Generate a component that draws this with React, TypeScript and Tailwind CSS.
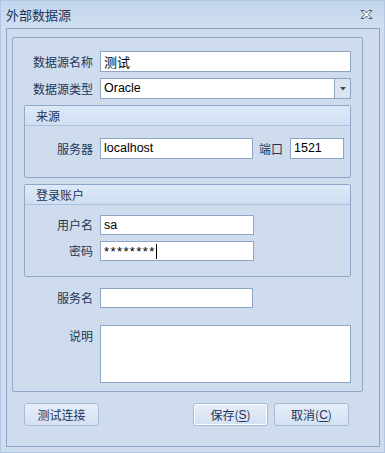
import React from 'react';

const cjk = '"Noto Sans CJK SC", "Liberation Sans", sans-serif';
const latin = '"Liberation Sans", "Noto Sans CJK SC", sans-serif';

function Label({ text, width = 'w-[87px]' }: { text: string; width?: string }) {
  return (
    <div className={`${width} shrink-0 pr-[7px] text-right text-[12px] leading-none text-[#1e3557]`}>{text}</div>
  );
}

function Field({ value, className = '' }: { value?: React.ReactNode; className?: string }) {
  return (
    <div
      className={`flex items-center bg-white border border-[#8ea5c5] px-[3px] text-[12.5px] text-black leading-none ${className}`}
      style={{ fontFamily: latin }}
    >
      {value}
    </div>
  );
}

function GroupBox({ title, className = '', children }: { title: string; className?: string; children: React.ReactNode }) {
  return (
    <div className={`ml-[11px] w-[327px] border border-[#8fa7c8] rounded-[2px] flex flex-col ${className}`}>
      <div className="h-[20px] shrink-0 bg-gradient-to-b from-[#dde9f8] to-[#cfdff3] border-b border-[#a9c2e2] flex items-center pl-[11px] text-[12px] text-[#1e3557]">
        {title}
      </div>
      {children}
    </div>
  );
}

function Btn({ children, focused = false, className = '' }: { children: React.ReactNode; focused?: boolean; className?: string }) {
  return (
    <div
      className={`w-[75px] h-[23px] rounded-[3px] border ${focused ? 'border-[#a4b9d6] shadow-[inset_0_0_0_1px_#ffffff]' : 'border-[#a9bcd6]'} bg-gradient-to-b from-[#e6eef9] to-[#d4e1f2] flex items-center justify-center text-[12px] text-[#1e3557] ${className}`}
    >
      {children}
    </div>
  );
}

export default function App() {
  return (
    <div
      className="w-[385px] h-[453px] bg-[#cddcef] border border-[#b2c6e2] flex flex-col overflow-hidden"
      style={{ fontFamily: cjk }}
    >
      {/* title bar */}
      <div className="h-[27px] shrink-0 bg-gradient-to-b from-[#c3d6ee] to-[#cfdef1] flex items-center justify-between pl-[5px] pr-[11px]">
        <span className="text-[13px] text-[#1e3557]">外部数据源</span>
        <svg width="13" height="11" viewBox="0 0 13 11">
          <path
            d="M1 1.5 L4 1.5 L6.5 4 L9 1.5 L12 1.5 L8.2 5.5 L12 9.5 L9 9.5 L6.5 7 L4 9.5 L1 9.5 L4.8 5.5 Z"
            fill="#ffffff"
            stroke="#4b5563"
            strokeWidth="1"
            strokeLinejoin="round"
          />
        </svg>
      </div>

      {/* outer panel */}
      <div className="ml-[5px] w-[374px] h-[419px] border border-[#8da3c3] bg-[#cfdcee] flex flex-col">
        <div className="ml-[5px] mt-[8px] w-[351px] h-[355px] border border-[#8fa7c8] rounded-[2px] flex flex-col">
          {/* name */}
          <div className="flex items-center mt-[13px]">
            <Label text="数据源名称" />
            <Field value={<span style={{ fontFamily: cjk }} className="text-[13px]">测试</span>} className="w-[251px] h-[21px]" />
          </div>
          {/* type */}
          <div className="flex items-center mt-[6px]">
            <Label text="数据源类型" />
            <div className="w-[251px] h-[21px] flex bg-white border border-[#8ea5c5]">
              <div className="flex-1 flex items-center px-[3px] text-[12.5px] text-black" style={{ fontFamily: latin }}>
                Oracle
              </div>
              <div className="w-[16px] border-l border-[#8ea5c5] bg-[#dbe5f2] flex items-center justify-center">
                <svg width="6" height="4" viewBox="0 0 6 4">
                  <path d="M0 0 L6 0 L3 3.5 Z" fill="#3f4a5c" />
                </svg>
              </div>
            </div>
          </div>

          {/* source group */}
          <GroupBox title="来源" className="mt-[6px] h-[73px]">
            <div className="flex items-center mt-[12px] -ml-[12px]">
              <Label text="服务器" />
              <Field value="localhost" className="w-[153px] h-[21px]" />
              <span className="ml-[6px] text-[12px] text-[#1e3557]">端口</span>
              <Field value="1521" className="ml-[7px] w-[54px] h-[21px]" />
            </div>
          </GroupBox>

          {/* login group */}
          <GroupBox title="登录账户" className="mt-[6px] h-[93px]">
            <div className="flex items-center mt-[10px] -ml-[12px]">
              <Label text="用户名" />
              <Field value="sa" className="w-[154px] h-[20px]" />
            </div>
            <div className="flex items-center mt-[6px] -ml-[12px]">
              <Label text="密码" />
              <Field
                value={
                  <span className="flex items-center">
                    <span className="tracking-[1.4px] text-[13px]">********</span>
                    <span className="w-px h-[15px] bg-black" />
                  </span>
                }
                className="w-[154px] h-[20px]"
              />
            </div>
          </GroupBox>

          {/* service name */}
          <div className="flex items-center mt-[11px]">
            <Label text="服务名" />
            <Field className="w-[153px] h-[20px]" />
          </div>

          {/* description */}
          <div className="flex items-start mt-[17px]">
            <div className="pt-[5px]">
              <Label text="说明" />
            </div>
            <Field className="w-[251px] h-[58px]" />
          </div>
        </div>

        {/* buttons */}
        <div className="flex items-center mt-[11px] ml-[17px]">
          <Btn>测试连接</Btn>
          <Btn focused className="ml-[94px]">
            保存(<span className="underline underline-offset-2" style={{ fontFamily: latin }}>S</span>)
          </Btn>
          <Btn className="ml-[6px]">
            取消(<span className="underline underline-offset-2" style={{ fontFamily: latin }}>C</span>)
          </Btn>
        </div>
      </div>
    </div>
  );
}
